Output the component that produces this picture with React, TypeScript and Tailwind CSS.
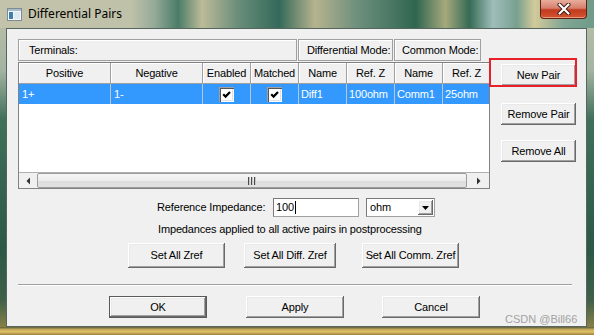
import React from "react";

const btn =
  "flex items-center justify-center bg-[#f0f0f0] text-black shadow-[inset_-1px_-1px_#696969,inset_1px_1px_#ffffff,inset_-2px_-2px_#a0a0a0,inset_2px_2px_#e9e9e9]";

function Btn({ children, className }: { children: React.ReactNode; className: string }) {
  return <div className={`${btn} ${className}`}>{children}</div>;
}

function Check() {
  return (
    <div className="w-[15px] h-[15px] bg-white shadow-[inset_1px_1px_#a0a0a0,inset_2px_2px_#555555,inset_-1px_-1px_#ffffff,inset_-2px_-2px_#e3e3e3] flex items-center justify-center">
      <svg width="15" height="15" viewBox="0 0 15 15">
        <path d="M4.2 7.2 L6.6 9.6 L11 5" fill="none" stroke="#000" strokeWidth="2.2" />
      </svg>
    </div>
  );
}

const cols = [92, 92, 48, 48, 48, 48, 48, 48];
const heads = ["Positive", "Negative", "Enabled", "Matched", "Name", "Ref. Z", "Name", "Ref. Z"];

export default function App() {
  return (
    <div className="relative w-[594px] h-[335px] overflow-hidden flex flex-col font-['Liberation_Sans',Arial,sans-serif] text-[11px] tracking-[-0.15px] text-black bg-[linear-gradient(to_bottom,#bfc1a9_0px,#a3b4a2_70px,#406f5a_120px,#2b5946_250px,#3f5f48_300px,#9c8a48_335px)]">
      {/* title bar */}
      <div className="flex h-[28px] shrink-0 items-start bg-[linear-gradient(to_right,#c3c3ab_0%,#c0c1a9_22%,#95aa98_26%,#4a7c68_30%,#bdbb98_34%,#6a8e7a_40%,#34695a_47%,#b6b38e_53%,#6f907e_60%,#2f6650_70%,#a6a97c_75%,#356b55_79%,#9fbdba_83%,#78a090_87%,#d2ca9a_90%,#80a594_95%,#6f9a88_100%)]">
        <div className="ml-[7px] mt-[8px]">
          <svg width="15" height="13" viewBox="0 0 15 13">
            <rect x="0.5" y="0.5" width="14" height="12" fill="#f4f6f8" stroke="#7d8c94" />
            <rect x="1" y="1" width="13" height="2" fill="#a8bccb" />
            <rect x="2" y="4" width="4" height="7" fill="#3f7fae" />
            <rect x="7" y="4" width="6" height="7" fill="#dfe8ee" />
          </svg>
        </div>
        <div className="ml-[6px] mt-[6px] leading-[16px] text-[12px] tracking-normal font-['Noto_Sans',sans-serif] text-black">
          Differential Pairs
        </div>
        <div className="ml-auto mr-[7px] w-[47px] h-[19px] rounded-b-[4px] border border-t-0 border-[#5b2318] bg-[linear-gradient(to_bottom,#e8ad9c_0%,#d6806c_45%,#c23a1f_55%,#d4552f_100%)] shadow-[inset_0_-1px_#e99a7a] flex items-center justify-center">
          <svg width="14" height="12" viewBox="0 0 14 12">
            <path d="M2.5 1.5 L11.5 10.5 M11.5 1.5 L2.5 10.5" stroke="#3d1a12" strokeWidth="4" strokeLinecap="round" />
            <path d="M2.5 1.5 L11.5 10.5 M11.5 1.5 L2.5 10.5" stroke="#ffffff" strokeWidth="2.2" strokeLinecap="round" />
          </svg>
        </div>
      </div>

      {/* middle */}
      <div className="flex h-[299px] shrink-0">
        <div className="w-[6px] shrink-0" />
        <div className="w-[581px] h-[299px] shrink-0 border border-[#55665c] bg-[#f0f0f0] flex flex-col">
          {/* top section */}
          <div className="flex mt-[10px] ml-[11px]">
            <div className="w-[472px] flex flex-col">
              <div className="flex h-[22px]">
                <div className="w-[279px] h-[22px] border border-[#a0a0a0] shadow-[inset_1px_1px_#ffffff] flex items-center pl-[10px]">
                  Terminals:
                </div>
                <div className="ml-[1px] w-[95px] h-[22px] border border-[#a0a0a0] shadow-[inset_1px_1px_#ffffff] flex items-center pl-[8px] whitespace-nowrap">
                  Differential Mode:
                </div>
                <div className="ml-[1px] w-[87px] h-[22px] border border-[#a0a0a0] shadow-[inset_1px_1px_#ffffff] flex items-center pl-[7px] whitespace-nowrap overflow-hidden">
                  Common Mode:
                </div>
              </div>
              <div className="mt-[1px] h-[127px] border border-[#828282] bg-white flex flex-col overflow-hidden">
                <div className="flex h-[21px] shrink-0">
                  {cols.map((w, i) => (
                    <div
                      key={i}
                      style={{ width: w }}
                      className="shrink-0 h-[21px] bg-[#f0f0f0] border-r border-b border-[#a0a0a0] shadow-[inset_1px_1px_#ffffff] flex items-center justify-center whitespace-nowrap"
                    >
                      {heads[i]}
                    </div>
                  ))}
                </div>
                <div className="flex h-[20px] shrink-0 bg-[#3399ff] text-white">
                  <div className="w-[92px] shrink-0 border-r border-[#b9c6d3] flex items-center pl-[3px]">1+</div>
                  <div className="w-[92px] shrink-0 border-r border-[#b9c6d3] flex items-center pl-[3px]">1-</div>
                  <div className="w-[48px] shrink-0 border-r border-[#b9c6d3] flex items-center justify-center">
                    <Check />
                  </div>
                  <div className="w-[48px] shrink-0 border-r border-[#b9c6d3] flex items-center justify-center">
                    <Check />
                  </div>
                  <div className="w-[48px] shrink-0 border-r border-[#b9c6d3] flex items-center pl-[2px]">Diff1</div>
                  <div className="w-[48px] shrink-0 border-r border-[#b9c6d3] flex items-center pl-[2px]">100ohm</div>
                  <div className="w-[48px] shrink-0 border-r border-[#b9c6d3] flex items-center pl-[2px]">Comm1</div>
                  <div className="w-[48px] shrink-0 flex items-center pl-[2px]">25ohm</div>
                </div>
                <div className="flex-1" />
                <div className="flex h-[16px] shrink-0 bg-[#f0f0f0] border-t border-[#b0b0b0]">
                  <div className="w-[18px] flex items-center justify-center">
                    <svg width="5" height="8" viewBox="0 0 5 8">
                      <path d="M4 0.5 L0.5 4 L4 7.5 Z" fill="#303030" />
                    </svg>
                  </div>
                  <div className="flex-1 rounded-[2px] border border-[#9c9c9c] bg-[linear-gradient(to_bottom,#f6f6f6,#ececec_50%,#dcdcdc_51%,#e2e2e2)] flex items-center justify-center">
                    <svg width="9" height="8" viewBox="0 0 9 8">
                      <rect x="0" y="0" width="2" height="8" fill="#4a4a4a" />
                      <rect x="3" y="0" width="2" height="8" fill="#4a4a4a" />
                      <rect x="6" y="0" width="2" height="8" fill="#4a4a4a" />
                      <rect x="1" y="0" width="1" height="8" fill="#c8c8c8" />
                      <rect x="4" y="0" width="1" height="8" fill="#c8c8c8" />
                      <rect x="7" y="0" width="1" height="8" fill="#c8c8c8" />
                    </svg>
                  </div>
                  <div className="w-[22px] flex items-center justify-center">
                    <svg width="5" height="8" viewBox="0 0 5 8">
                      <path d="M1 0.5 L4.5 4 L1 7.5 Z" fill="#303030" />
                    </svg>
                  </div>
                </div>
              </div>
            </div>
            <div className="ml-[11px] w-[75px] flex flex-col">
              <Btn className="mt-[25px] h-[22px] w-[75px]">New Pair</Btn>
              <Btn className="mt-[17px] h-[22px] w-[75px]">Remove Pair</Btn>
              <Btn className="mt-[15px] h-[22px] w-[75px]">Remove All</Btn>
            </div>
          </div>

          {/* impedance row */}
          <div className="flex mt-[9px] h-[19px] pl-[150px] items-center">
            <div className="w-[116px] whitespace-nowrap">Reference Impedance:</div>
            <div className="w-[86px] h-[19px] bg-white border border-[#a0a0a0] border-t-[#7a7a7a] border-l-[#7a7a7a] flex items-center pl-[2px]">
              <span>100</span>
              <span className="ml-[1px] w-[1px] h-[13px] bg-black" />
            </div>
            <div className="ml-[7px] w-[69px] h-[19px] bg-white border border-[#a0a0a0] border-t-[#7a7a7a] border-l-[#7a7a7a] flex items-center pl-[3px]">
              <span className="flex-1">ohm</span>
              <div className={`${btn} w-[15px] h-[15px] mr-[1px]`}>
                <svg width="7" height="4" viewBox="0 0 7 4">
                  <path d="M0 0 L7 0 L3.5 4 Z" fill="#000" />
                </svg>
              </div>
            </div>
          </div>

          <div className="mt-[6px] h-[13px] leading-[13px] pl-[151px] whitespace-nowrap">
            Impedances applied to all active pairs in postprocessing
          </div>

          <div className="flex mt-[7px] h-[25px] pl-[121px]">
            <Btn className="w-[97px] h-[25px]">Set All Zref</Btn>
            <Btn className="ml-[19px] w-[92px] h-[25px]">Set All Diff. Zref</Btn>
            <Btn className="ml-[26px] w-[97px] h-[25px]">Set All Comm. Zref</Btn>
          </div>

          <div className="mt-[16px] ml-[11px] w-[554px] h-[2px] border-t border-b border-t-[#a0a0a0] border-b-white" />

          <div className="flex mt-[10px] h-[22px] pl-[102px]">
            <Btn className="w-[98px] h-[22px] border border-[#5a5a5a]">OK</Btn>
            <Btn className="ml-[39px] w-[98px] h-[22px]">Apply</Btn>
            <Btn className="ml-[38px] w-[98px] h-[22px]">Cancel</Btn>
          </div>
        </div>
        <div className="w-[7px] shrink-0" />
      </div>

      <div className="h-[8px] shrink-0 bg-[linear-gradient(to_bottom,#5e5c3c_0%,#c2a85a_30%,#e2c266_60%,#9a7e3e_100%)]" />

      {/* annotation */}
      <div className="absolute left-[489px] top-[58px] w-[88px] h-[29px] border-2 border-[#e8202a]" />
      <div className="absolute left-[505px] top-[312px] text-[11px] tracking-normal leading-[14px] text-[#a3a3a3]">
        CSDN @Bill66
      </div>
    </div>
  );
}
